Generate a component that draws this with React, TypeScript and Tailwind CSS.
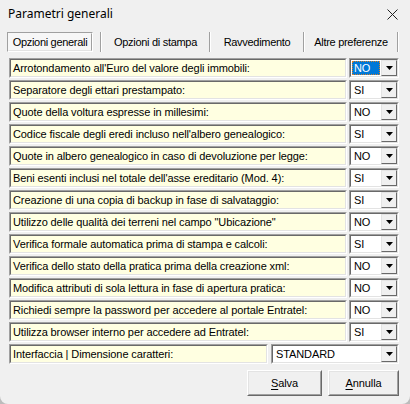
import type { ReactNode } from 'react'

const rows: { label: string; value: string }[] = [
  { label: "Arrotondamento all'Euro del valore degli immobili:", value: 'NO' },
  { label: 'Separatore degli ettari prestampato:', value: 'SI' },
  { label: 'Quote della voltura espresse in millesimi:', value: 'NO' },
  { label: "Codice fiscale degli eredi incluso nell'albero genealogico:", value: 'SI' },
  { label: 'Quote in albero genealogico in caso di devoluzione per legge:', value: 'NO' },
  { label: "Beni esenti inclusi nel totale dell'asse ereditario (Mod. 4):", value: 'SI' },
  { label: 'Creazione di una copia di backup in fase di salvataggio:', value: 'SI' },
  { label: 'Utilizzo delle qualità dei terreni nel campo "Ubicazione"', value: 'NO' },
  { label: 'Verifica formale automatica prima di stampa e calcoli:', value: 'SI' },
  { label: 'Verifica dello stato della pratica prima della creazione xml:', value: 'NO' },
  { label: 'Modifica attributi di sola lettura in fase di apertura pratica:', value: 'NO' },
  { label: 'Richiedi sempre la password per accedere al portale Entratel:', value: 'NO' },
  { label: 'Utilizza browser interno per accedere ad Entratel:', value: 'SI' },
]

const tabs = ['Opzioni generali', 'Opzioni di stampa', 'Ravvedimento', 'Altre preferenze']

function Sunken({ className, children }: { className: string; children: ReactNode }) {
  return (
    <div className={`border border-t-[#a0a0a0] border-l-[#a0a0a0] border-b-white border-r-white ${className}`}>
      <div className="h-full w-full border border-t-[#696969] border-l-[#696969] border-b-[#e3e3e3] border-r-[#e3e3e3]">
        {children}
      </div>
    </div>
  )
}

function Arrow() {
  return (
    <div className="flex h-full w-[16px] items-center justify-center border border-t-[#e3e3e3] border-l-[#e3e3e3] border-b-[#696969] border-r-[#696969] bg-[#f0f0f0]">
      <svg width="7" height="4" viewBox="0 0 7 4">
        <path d="M0 0h7L3.5 4z" fill="#000" />
      </svg>
    </div>
  )
}

function Combo({ value, focused, className }: { value: string; focused?: boolean; className: string }) {
  return (
    <Sunken className={`h-[20px] ${className}`}>
      <div className="flex h-full bg-white">
        <div className="flex flex-1 items-center p-[1px]">
          {focused ? (
            <div className="flex h-full w-full items-center border border-dotted border-[#d9822b] bg-[#0078d7] pl-[1px] text-white">
              {value}
            </div>
          ) : (
            <span className="pl-[2px]">{value}</span>
          )}
        </div>
        <Arrow />
      </div>
    </Sunken>
  )
}

function Label({ text, className }: { text: string; className: string }) {
  return (
    <Sunken className={`h-[20px] ${className}`}>
      <div className="flex h-full items-center bg-[#ffffe1] pl-[2px] text-black">{text}</div>
    </Sunken>
  )
}

function Button({ first, rest, className }: { first: string; rest: string; className: string }) {
  return (
    <div className={`h-[26px] border border-t-white border-l-white border-b-[#696969] border-r-[#696969] ${className}`}>
      <div className="flex h-full items-center justify-center border border-t-[#e3e3e3] border-l-[#e3e3e3] border-b-[#a0a0a0] border-r-[#a0a0a0] bg-[#f0f0f0]">
        <span className="underline underline-offset-2">{first}</span>
        {rest}
      </div>
    </div>
  )
}

export default function App() {
  return (
    <div className="h-[404px] w-[410px] bg-[#bcbcbc]">
      <div
        className="flex h-full w-full flex-col rounded-b-[8px] bg-[#f0f0f0] text-[11px] tracking-[-0.1px] text-black"
        style={{ fontFamily: '"Liberation Sans", Arial, sans-serif' }}
      >
        <div className="flex h-[28px] items-center justify-between pl-[8px] pr-[12px]">
          <span className="text-[12px] tracking-normal" style={{ fontFamily: '"Noto Sans", sans-serif' }}>
            Parametri generali
          </span>
          <svg width="11" height="11" viewBox="0 0 11 11">
            <path d="M0.5 0.5l10 10M10.5 0.5l-10 10" stroke="#222" strokeWidth="1" />
          </svg>
        </div>

        <div className="mt-[4px] flex h-[20px] items-stretch pl-[7px]">
          <div className="flex w-[86px] items-center justify-center border border-t-[#a0a0a0] border-l-[#a0a0a0] border-b-white border-r-white bg-[#f7f7f7] tracking-[-0.3px]">
            <div className="flex h-full w-full items-center justify-center border border-b-[#e3e3e3] border-r-[#a0a0a0] border-t-transparent border-l-transparent">
              {tabs[0]}
            </div>
          </div>
          <div className="ml-[7px] w-[2px] border-l border-[#a0a0a0] bg-white" />
          <div className="flex w-[107px] items-center justify-center tracking-[-0.3px]">{tabs[1]}</div>
          <div className="w-[2px] border-l border-[#a0a0a0] bg-white" />
          <div className="flex w-[92px] items-center justify-center tracking-[-0.3px]">{tabs[2]}</div>
          <div className="w-[2px] border-l border-[#a0a0a0] bg-white" />
          <div className="flex w-[92px] items-center justify-center tracking-[-0.3px]">{tabs[3]}</div>
          <div className="w-[2px] border-l border-[#a0a0a0] bg-white" />
        </div>

        <div className="mt-[6px] flex flex-col gap-[2px] pl-[9px]">
          {rows.map((r, i) => (
            <div key={r.label} className="flex gap-[2px]">
              <Label text={r.label} className="w-[338px]" />
              <Combo value={r.value} focused={i === 0} className="w-[50px]" />
            </div>
          ))}
          <div className="flex gap-[3px]">
            <Label text="Interfaccia | Dimensione caratteri:" className="w-[259px]" />
            <Combo value="STANDARD" className="w-[128px]" />
          </div>
        </div>

        <div className="mt-[6px] flex justify-end gap-[6px] pr-[11px]">
          <Button first="S" rest="alva" className="w-[75px]" />
          <Button first="A" rest="nnulla" className="w-[71px]" />
        </div>
      </div>
    </div>
  )
}
